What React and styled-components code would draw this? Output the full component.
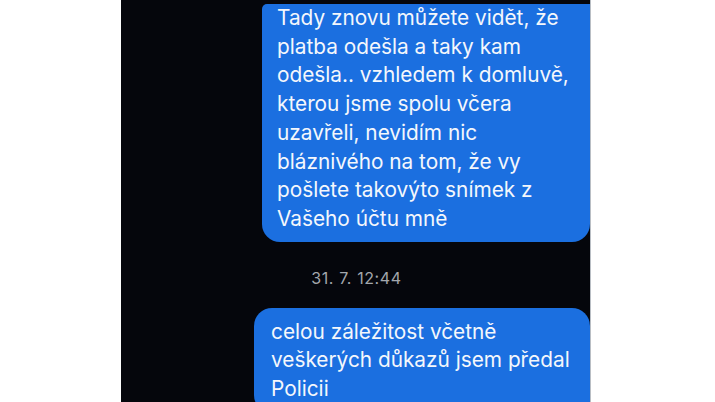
import React from "react";
import styled, { createGlobalStyle } from "styled-components";

const Global = createGlobalStyle`
  html, body { margin: 0; padding: 0; background: #ffffff; }
  body { font-family: Inter, "Noto Sans", sans-serif; }
`;

const Page = styled.div`
  width: 715px;
  height: 402px;
  background: #ffffff;
  display: flex;
  padding-left: 121px;
  box-sizing: border-box;
  overflow: hidden;
`;

const Panel = styled.div`
  width: 469px;
  height: 402px;
  background: #05060c;
  border-right: 1px solid #b9bec4;
  display: flex;
  flex-direction: column;
  align-items: flex-end;
  overflow: hidden;
`;

const Bubble = styled.div`
  background: #1b6fe0;
  color: #f4f7fc;
  font-family: Inter, "Noto Sans", sans-serif;
  font-size: 20.8px;
  line-height: ${(p) => p.$lh}px;
  width: ${(p) => p.$width}px;
  box-sizing: border-box;
  margin-top: ${(p) => p.$mt}px;
  padding: ${(p) => p.$pad};
  border-radius: ${(p) => p.$radius};
  flex-shrink: 0;
`;

const Line = styled.span`
  display: block;
  white-space: nowrap;
`;

const Stamp = styled.div`
  align-self: stretch;
  text-align: center;
  margin-top: 26px;
  font-family: Inter, "Noto Sans", sans-serif;
  font-size: 16px;
  letter-spacing: 0.6px;
  line-height: 20px;
  color: #a3a7ad;
  padding-left: 2px;
`;

const first = [
  "Tady znovu můžete vidět, že",
  "platba odešla a taky kam",
  "odešla.. vzhledem k domluvě,",
  "kterou jsme spolu včera",
  "uzavřeli, nevidím nic",
  "bláznivého na tom, že vy",
  "pošlete takovýto snímek z",
  "Vašeho účtu mně",
];

const second = [
  "celou záležitost včetně",
  "veškerých důkazů jsem předal",
  "Policii",
];

export default function App() {
  return (
    <>
      <Global />
      <Page>
        <Panel>
          <Bubble $width={328} $mt={4} $lh={28.7} $pad="0 8px 8px 15px" $radius="5px 0 18px 18px">
            {first.map((l) => (
              <Line key={l}>{l}</Line>
            ))}
          </Bubble>
          <Stamp>31. 7. 12:44</Stamp>
          <Bubble $width={336} $mt={20} $lh={28.5} $pad="10px 8px 10px 17px" $radius="18px 18px 0 18px">
            {second.map((l) => (
              <Line key={l}>{l}</Line>
            ))}
          </Bubble>
        </Panel>
      </Page>
    </>
  );
}
